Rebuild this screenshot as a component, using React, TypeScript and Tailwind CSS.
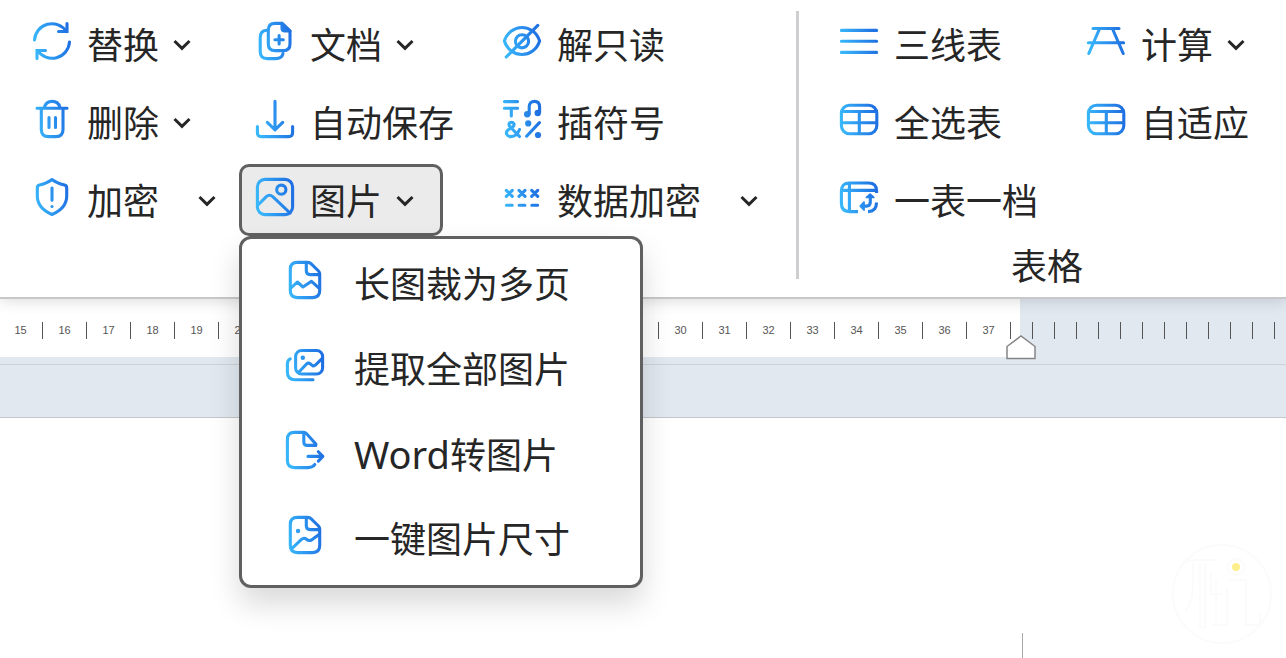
import type { ReactNode } from "react";

function Glyph({ children, className = "mb-1.5" }: { children: ReactNode; className?: string }) {
  return (
    <svg
      viewBox="0 0 38 38"
      className={`size-[38px] shrink-0 overflow-visible ${className}`}
      fill="none"
      stroke="url(#ink)"
      strokeWidth="3.1"
      strokeLinecap="round"
      strokeLinejoin="round"
      aria-hidden="true"
    >
      {children}
    </svg>
  );
}

function Chevron() {
  return (
    <svg viewBox="0 0 18 12" className="mt-0.5 h-3 w-[18px] shrink-0" fill="none" stroke="#262626" strokeWidth="3" aria-hidden="true">
      <path d="M1.5 2 9 9.3 16.5 2" />
    </svg>
  );
}

const sheet = (
  <>
    <rect x="1.4" y="5.2" width="35.4" height="28.6" rx="8" />
    <path d="M3 11.5H35.5M1.5 22.7H36.5M19.3 11.5V33.5" strokeLinecap="butt" />
  </>
);

const foldedPage = (
  <>
    <path d="M21.5 1.4H11.3Q4.3 1.4 4.3 8.4V29.6Q4.3 36.6 11.3 36.6H26.7Q33.7 36.6 33.7 29.6V13Q33.7 11.3 32.5 10L25.2 2.8Q23.8 1.4 21.5 1.4Z" />
    <path d="M20.3 2V9.8Q20.3 13.6 24.1 13.6H33" />
  </>
);

const icons: Record<string, ReactNode> = {
  replace: (
    <>
      <path d="M1.5 18A17.5 17.5 0 0 1 33.5 9.5M36.5 20A17.5 17.5 0 0 1 4.5 28.5" />
      <path d="M34 1.5V9.5H25.5M4 36.5V28.5H12.5" strokeLinejoin="miter" />
    </>
  ),
  trash: (
    <>
      <path d="M4 8.3H34M11.3 7.5C12.5 3.3 15.3 1.4 19 1.4S26 3.3 27 7.5" />
      <path d="M8.3 8.5V29.4Q8.3 36.6 15.5 36.6H22.8Q30 36.6 30 29.4V8.5M16 17.5V27.5M22.5 17.5V27.5" />
    </>
  ),
  shield: (
    <>
      <path d="M19 1.5C15 4.8 9.5 6.3 6.5 7Q4.3 7.6 4.3 10V18C4.3 27 11 33 19 36.5C27 33 33.7 27 33.7 18V10Q33.7 7.6 31.5 7C28.5 6.3 23 4.8 19 1.5Z" />
      <path d="M18.9 10H19V22.3" />
      <circle cx="19" cy="28.5" r="1.6" fill="url(#ink)" stroke="none" />
    </>
  ),
  docs: (
    <>
      <path d="M26 1.4H19Q12.3 1.4 12.3 8.1V22Q12.3 28.6 19 28.6H27.3Q34 28.6 34 22V9Z" />
      <path d="M26 1.4 34 9H29Q26 9 26 6Z" fill="url(#ink)" />
      <path d="M10.5 8.3Q4.2 9 4.2 15.5V29.5Q4.2 36.6 11.3 36.6H19.5Q26 36.6 27 31.5M23.1 13.5V22M18.9 17.7H27.3" />
    </>
  ),
  save: <path d="M19 1.4V29M11.3 22.3 19 29.8 26.7 22.3M1.4 26.5V32.5Q1.4 36.6 5.5 36.6H32.5Q36.6 36.6 36.6 32.5V26.5" />,
  image: (
    <>
      <rect x="1.4" y="1.4" width="35.2" height="35.2" rx="7.5" />
      <circle cx="25.3" cy="11.7" r="4.6" />
      <path d="M2.5 26.5 10 18.8Q13.5 15.7 17 18.8L34 35" />
    </>
  ),
  eye: (
    <>
      <path d="M1.4 19C4 10.5 11.5 5.5 19 5.5S34 10.5 36.6 19C34 27.5 26.5 32.5 19 32.5S4 27.5 1.4 19Z" />
      <circle cx="19" cy="19.3" r="6.6" />
      <path d="M3.2 35 34.8 3.4" />
    </>
  ),
  symbols: (
    <>
      <path d="M1.4 1.6H14.6M1.4 8.3H14.6M8.3 8.5V16M26.2 14V7C26.2 2.6 28.5 1.4 31.4 1.4S36.6 2.6 36.6 7V12.5" />
      <path d="M16.5 36.5 6.8 26.5C5.2 24.4 6.2 22.2 8.5 22.2S11.8 24.4 10.4 26.3L5 30C1.8 33 3.8 36.6 8 36.6C12 36.6 14.8 34 16.5 29.5M23.6 36.2 36.4 22.6" />
      <g fill="url(#ink)" stroke="none">
        <circle cx="24.2" cy="14.2" r="3.2" />
        <circle cx="34.7" cy="13" r="3.2" />
        <circle cx="25.2" cy="23.4" r="3.1" />
        <circle cx="35" cy="35" r="3.1" />
      </g>
    </>
  ),
  mask: (
    <path d="M3.3 12.3 9.3 18.3M9.3 12.3 3.3 18.3M16 12.3 22 18.3M22 12.3 16 18.3M28.7 12.3 34.7 18.3M34.7 12.3 28.7 18.3M3.4 27.2H9.2M16.1 27.2H21.9M28.8 27.2H34.6" />
  ),
  lines: <path d="M1.4 8.4H36.6M1.4 19.3H36.6M1.4 30.4H36.6" />,
  sheet,
  sheetSync: (
    <>
      <path d="M18 33.6H9.4Q1.4 33.6 1.4 25.6V13Q1.4 5 9.4 5H28.6Q36.6 5 36.6 13V15M2.5 12.4H36M9.4 5.5V33" strokeLinecap="butt" />
      <path d="M36.5 24.5Q36.5 33.6 28 33.6" strokeLinecap="butt" />
      <path d="M24 24.2 20.3 28.1 24 32ZM26.5 19.4 30.1 16.2 33.7 19.4Z" fill="url(#ink)" strokeWidth="1.8" />
      <path d="M24 28.1H26.5Q30.3 28.1 30.3 24V20" />
    </>
  ),
  calc: <path d="M6 6.5H32M1.4 20.7H36.6M12.2 7.5 1.8 31.5M25.8 7.5 36.2 31.5" />,
  longPage: (
    <>
      {foldedPage}
      <path d="M5 27 11.3 21 17 26 25.5 20.3 33 27.2" />
    </>
  ),
  gallery: (
    <>
      <rect x="9.6" y="4.5" width="27" height="23.5" rx="6" />
      <path d="M4.2 12.8Q1.4 14 1.4 18V26Q1.4 33.7 9 33.7H27M12.5 26.5 20.5 18Q22.3 16.2 24.2 17.8L26.5 19.6Q28 20.5 29.5 19L36.3 12.3" />
      <circle cx="16.8" cy="11.7" r="2.2" fill="url(#ink)" stroke="none" />
    </>
  ),
  exportPage: (
    <path d="M28.8 33.5Q26.8 36.6 22 36.6H8.4Q1.4 36.6 1.4 29.6V8.4Q1.4 1.4 8.4 1.4H17.5Q19.3 1.4 20.6 2.8L29.8 13V14.4H21.3Q17.8 14.4 17.8 10.9V2M22 25.4H36M32.3 20.7 36.8 25.4 32.3 30.1" />
  ),
  imagePage: (
    <>
      {foldedPage}
      <path d="M5.5 32.8 15.5 23.4Q18 21.2 20.4 23.2T25.5 24L33 18.5" />
      <circle cx="12" cy="15" r="2.2" fill="url(#ink)" stroke="none" />
    </>
  ),
};

type Tool = { icon: string; label: string; latin?: string; arrow?: boolean; split?: boolean };

const editTools: Tool[] = [
  { icon: "replace", label: "替换", arrow: true },
  { icon: "docs", label: "文档", arrow: true },
  { icon: "eye", label: "解只读" },
  { icon: "trash", label: "删除", arrow: true },
  { icon: "save", label: "自动保存" },
  { icon: "symbols", label: "插符号" },
  { icon: "shield", label: "加密", split: true },
  { icon: "image", label: "图片", arrow: true },
  { icon: "mask", label: "数据加密", split: true },
];

const tableTools: Tool[] = [
  { icon: "lines", label: "三线表" },
  { icon: "calc", label: "计算", arrow: true },
  { icon: "sheet", label: "全选表" },
  { icon: "sheet", label: "自适应" },
  { icon: "sheetSync", label: "一表一档" },
];

const menuItems: Tool[] = [
  { icon: "longPage", label: "长图裁为多页" },
  { icon: "gallery", label: "提取全部图片" },
  { icon: "exportPage", latin: "Word", label: "转图片" },
  { icon: "imagePage", label: "一键图片尺寸" },
];

function ToolButton({ tool, open = false }: { tool: Tool; open?: boolean }) {
  const face = open ? "border-[#606060] bg-[#ebebeb]" : "border-transparent";
  return (
    <div className="flex items-center">
      <button
        type="button"
        aria-expanded={tool.arrow ? open : undefined}
        className={`flex h-[72px] items-center rounded-[10px] border-[3px] pl-3.5 whitespace-nowrap ${tool.arrow ? "pr-[26px]" : ""} ${face}`}
      >
        <Glyph>{icons[tool.icon]}</Glyph>
        <span className="ml-4 pt-1">{tool.label}</span>
        {tool.arrow && (
          <span className="ml-3.5">
            <Chevron />
          </span>
        )}
      </button>
      {tool.split && (
        <button type="button" aria-label={`${tool.label}选项`} className="ml-9 flex h-[72px] items-center">
          <Chevron />
        </button>
      )}
    </div>
  );
}

function ImageMenu() {
  return (
    <ul
      role="menu"
      className="absolute top-full left-0 z-10 w-[404px] rounded-[12px] border-[3px] border-[#606060] bg-white py-[3px] shadow-[0_16px_30px_rgba(0,0,0,0.15)]"
    >
      {menuItems.map((item) => (
        <li key={item.label} role="none">
          <button type="button" role="menuitem" className="flex h-[85px] w-full items-center pl-11 whitespace-nowrap">
            <Glyph className="mb-2.5">{icons[item.icon]}</Glyph>
            <span className="ml-[30px]">
              {item.latin && <span className="text-[38px]">{item.latin}</span>}
              {item.label}
            </span>
          </button>
        </li>
      ))}
    </ul>
  );
}

function Ribbon() {
  return (
    <header className="relative z-10 flex border-b-2 border-[#c6c8ca] bg-white pt-2 pb-[9px] text-[36px] leading-[42px] text-[#262626] shadow-[0_2px_14px_rgba(0,0,0,0.14)]">
      <div className="grid shrink-0 grid-cols-[223px_247px_310px] content-start gap-y-1.5 pl-4">
        {editTools.map((tool) => (
          <div key={tool.label} className="relative w-max">
            <ToolButton tool={tool} open={tool.icon === "image"} />
            {tool.icon === "image" && <ImageMenu />}
          </div>
        ))}
      </div>
      <div className="mt-[3px] mb-[9px] w-[3px] shrink-0 bg-[#cfcfd1]" />
      <section className="ml-6 flex shrink-0 flex-col items-center" aria-labelledby="table-group">
        <div className="grid grid-cols-[247px_201px] gap-y-1.5">
          {tableTools.map((tool) => (
            <ToolButton key={tool.label} tool={tool} />
          ))}
        </div>
        <h2 id="table-group" className="mt-2.5">表格</h2>
      </section>
    </header>
  );
}

const pageNumbers = Array.from({ length: 23 }, (_, i) => i + 15);
const outerTicks = Array.from({ length: 60 }, (_, i) => i);

function Ruler() {
  return (
    <div className="relative flex h-[58px] overflow-hidden bg-[#e2e8f0] font-[Liberation_Sans,sans-serif] text-[11px] text-[#555]">
      <div className="-ml-px flex w-[1021px] shrink-0 items-center bg-white pt-[5px]">
        {pageNumbers.map((n) => (
          <span key={n} className="flex h-[17px] w-11 items-center justify-center border-r border-[#555]">
            {n}
          </span>
        ))}
      </div>
      <div className="flex flex-1 items-center pt-[5px]">
        <span className="h-[17px] w-[13px] shrink-0 border-r border-[#555]" />
        {outerTicks.map((t) => (
          <span key={t} className="h-[17px] w-[22px] shrink-0 border-r border-[#555]" />
        ))}
      </div>
    </div>
  );
}

function Watermark() {
  return (
    <svg viewBox="0 0 104 104" className="absolute right-3 bottom-3 size-[104px]" fill="none" stroke="#fbfbfb" strokeWidth="2" aria-hidden="true">
      <circle cx="52" cy="52" r="49" />
      <path d="M15 18H49M23 21V43Q23 60 15 70M30 21V85H35V21M41 31V52H52M46 38V82M41 83H57V45M60 38H76V83H90V70" />
      <circle cx="66" cy="25" r="8" />
      <circle cx="66" cy="25" r="4" fill="#fdf08c" stroke="none" />
    </svg>
  );
}

export default function App() {
  return (
    <div className="flex min-h-screen flex-col overflow-x-hidden bg-white font-['Noto_Sans','Noto_Sans_CJK_SC',sans-serif]">
      <svg className="absolute size-0" aria-hidden="true">
        <defs>
          <linearGradient id="ink" gradientUnits="userSpaceOnUse" x1="2" y1="22" x2="36" y2="16">
            <stop offset="0" stopColor="#38b6fa" />
            <stop offset="1" stopColor="#1f70e2" />
          </linearGradient>
        </defs>
      </svg>
      <Ribbon />
      <div className="relative">
        <Ruler />
        <div className="h-2 border-b border-[#cfd2d5] bg-[#e2e8f0]" />
        <svg viewBox="0 0 30 25" className="absolute top-9 left-[1006px] h-[25px] w-[30px]" fill="#fff" stroke="#858585" aria-hidden="true">
          <path d="M1 23.5V11.5L15 1 29 11.5V23.5Z" strokeWidth="1.5" />
        </svg>
      </div>
      <div className="h-[53px] border-b border-[#c3c6ca] bg-[#e2e8f0]" />
      <main className="relative flex flex-1 items-end">
        <div className="ml-[1022px] h-[25px] w-px bg-[#a8a8a8]" />
        <Watermark />
      </main>
    </div>
  );
}
